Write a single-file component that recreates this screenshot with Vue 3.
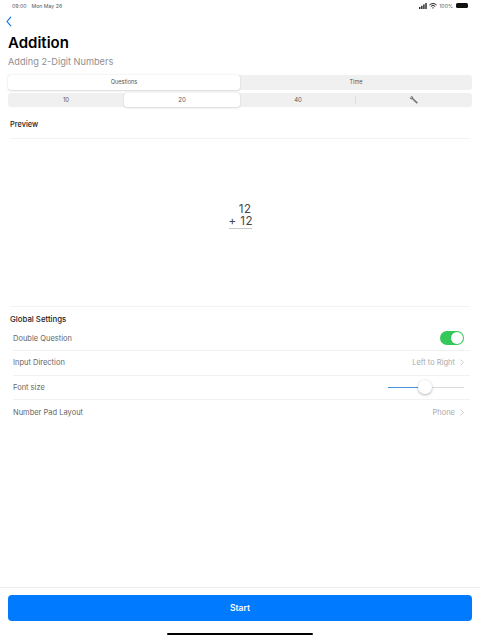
<template>
  <div class="screen">
    <!-- Status bar -->
    <div class="status-bar">
      <div class="status-left">
        <span>09:00</span>
        <span>Mon May 26</span>
      </div>
      <div class="status-right">
        <svg width="8" height="6" viewBox="0 0 8 6" class="signal">
          <rect x="0" y="4" width="1.4" height="2" />
          <rect x="2.1" y="2.8" width="1.4" height="3.2" />
          <rect x="4.2" y="1.4" width="1.4" height="4.6" />
          <rect x="6.3" y="0" width="1.4" height="6" />
        </svg>
        <svg width="8" height="6" viewBox="0 0 8 6" class="wifi">
          <path d="M0.4 2 A5.2 5.2 0 0 1 7.6 2" />
          <path d="M1.8 3.4 A3.2 3.2 0 0 1 6.2 3.4" />
          <path d="M3.1 4.7 A1.3 1.3 0 0 1 4.9 4.7 L4 5.7 Z" class="wifi-dot" />
        </svg>
        <span>100%</span>
        <div class="battery"></div>
      </div>
    </div>

    <!-- Nav -->
    <div class="nav">
      <svg width="6" height="11" viewBox="0 0 6 11" class="back">
        <path d="M5 0.8 L1 5.5 L5 10.2" />
      </svg>
    </div>

    <h1 class="title">Addition</h1>
    <div class="subtitle">Adding 2-Digit Numbers</div>

    <!-- Mode pickers -->
    <div class="segments">
      <div class="segment seg-top">
        <div v-for="m in modes" :key="m" class="seg-item" :class="{ active: m === 'Questions' }">{{ m }}</div>
      </div>
      <div class="segment seg-bottom">
        <div v-for="(c, i) in counts" :key="c" class="seg-item" :class="{ active: c === '20', 'has-sep': i === 2 }">{{ c }}</div>
        <div class="seg-item">
          <svg width="10" height="10" viewBox="0 0 10 10" class="wrench">
            <path d="M1.6 1.2 A2 2 0 0 1 4.3 3.2 L8.9 7.6 L7.7 8.8 L3.1 4.3 A2 2 0 0 1 0.9 1.9 L2.2 3 L2.9 2.4 Z" />
          </svg>
        </div>
      </div>
    </div>

    <!-- Preview -->
    <div class="section-title preview-title">Preview</div>
    <div class="preview">
      <div class="problem">
        <div class="problem-line">12</div>
        <div class="problem-line">+ 12</div>
        <div class="problem-rule"></div>
      </div>
    </div>

    <!-- Settings -->
    <div class="section-title settings-title">Global Settings</div>
    <div class="rows">
      <div class="row">
        <span>Double Question</span>
        <div class="toggle"><div class="knob"></div></div>
      </div>
      <div class="row">
        <span>Input Direction</span>
        <span class="value">Left to Right
          <svg width="4" height="7" viewBox="0 0 4 7" class="chev"><path d="M0.6 0.6 L3.4 3.5 L0.6 6.4" /></svg>
        </span>
      </div>
      <div class="row">
        <span>Font size</span>
        <div class="slider">
          <div class="slider-fill"></div>
          <div class="slider-track"></div>
          <div class="slider-thumb"></div>
        </div>
      </div>
      <div class="row">
        <span>Number Pad Layout</span>
        <span class="value">Phone
          <svg width="4" height="7" viewBox="0 0 4 7" class="chev"><path d="M0.6 0.6 L3.4 3.5 L0.6 6.4" /></svg>
        </span>
      </div>
    </div>

    <!-- Footer -->
    <div class="footer">
      <button class="start">Start</button>
      <div class="home-bar"></div>
    </div>
  </div>
</template>

<script setup>
const modes = ['Questions', 'Time']
const counts = ['10', '20', '40']
</script>

<style>
html, body {
  margin: 0;
  background: #fff;
}
</style>

<style scoped>
.screen {
  width: 480px;
  height: 640px;
  display: flex;
  flex-direction: column;
  background: #fff;
  overflow: hidden;
  font-family: Inter, "Liberation Sans", sans-serif;
  color: #000;
}

/* Status bar */
.status-bar {
  height: 11px;
  padding: 0 12px;
  display: flex;
  justify-content: space-between;
  align-items: center;
  font-size: 5.2px;
  color: #555;
}

.status-left {
  display: flex;
  gap: 5px;
}

.status-right {
  display: flex;
  align-items: center;
  gap: 2px;
}

.signal {
  fill: #222;
}

.wifi path {
  fill: none;
  stroke: #222;
  stroke-width: 1;
}

.wifi .wifi-dot {
  fill: #222;
  stroke: none;
}

.battery {
  width: 12px;
  height: 5px;
  margin-left: 1px;
  border-radius: 1.5px;
  background: #111;
}

/* Header */
.nav {
  height: 11px;
  margin-top: 5px;
  padding-left: 6px;
}

.back {
  display: block;
}

.back path {
  fill: none;
  stroke: #0a6fe0;
  stroke-width: 1.1;
}

.title {
  margin: 6px 0 0 8px;
  font-size: 15px;
  line-height: 20px;
  font-weight: 600;
}

.subtitle {
  margin: 3px 0 0 8px;
  font-size: 9.2px;
  line-height: 12px;
  color: #8e8e92;
}

/* Segments */
.segments {
  margin: 7px 8px 0;
  display: flex;
  flex-direction: column;
  gap: 3px;
}

.segment {
  display: flex;
  height: 14.5px;
  border-radius: 3px;
  background: #f0f0f1;
}

.seg-item {
  flex: 1;
  display: flex;
  align-items: center;
  justify-content: center;
  font-size: 5.6px;
  color: #555;
}

.seg-item.active {
  background: #fff;
  border-radius: 3px;
  box-shadow: 0 0.5px 2px rgba(0, 0, 0, 0.16);
}

/* short divider between two segments */
.seg-item.has-sep {
  position: relative;
}

.seg-item.has-sep::after {
  content: "";
  position: absolute;
  right: 0;
  top: 3.5px;
  bottom: 3.5px;
  width: 1px;
  background: #dedee0;
}

.seg-bottom .seg-item {
  font-size: 6px;
}

.wrench {
  fill: #777;
}

/* Sections */
.section-title {
  margin-left: 10px;
  font-size: 7.4px;
  line-height: 10px;
  font-weight: 500;
  color: #222;
}

.preview-title {
  margin-top: 13px;
}

.preview {
  height: 167px;
  margin: 7.5px 10px 0;
  border-top: 1px solid #f2f2f3;
  border-bottom: 1px solid #f2f2f3;
  display: flex;
  justify-content: center;
}

.problem {
  margin-top: 64px;
  width: 23px;
  font-size: 11.5px;
  letter-spacing: 0.5px;
  line-height: 12px;
  color: #444;
  text-align: right;
  white-space: nowrap;
}

.problem-rule {
  height: 1px;
  margin-top: 1px;
  background: #c8c8ca;
}

.settings-title {
  margin-top: 7px;
  font-size: 7.8px;
}

/* Rows */
.rows {
  margin: 3px 10px 0 13px;
}

.row {
  box-sizing: border-box;
  height: 24.6px;
  display: flex;
  align-items: center;
  justify-content: space-between;
  font-size: 7.5px;
  color: #666;
  border-bottom: 1px solid #f2f2f3;
  padding-right: 6px;
}

.row:last-child {
  border-bottom: none;
}

.value {
  display: flex;
  align-items: center;
  gap: 5px;
  color: #aaaaad;
}

.chev path {
  fill: none;
  stroke: #c8c8ca;
  stroke-width: 0.9;
}

.toggle {
  width: 24px;
  height: 14px;
  border-radius: 7px;
  background: #34c759;
  position: relative;
}

.knob {
  position: absolute;
  top: 1px;
  right: 1px;
  width: 12px;
  height: 12px;
  border-radius: 50%;
  background: #fff;
}

.slider {
  width: 76px;
  height: 14px;
  display: flex;
  align-items: center;
  position: relative;
}

.slider-fill {
  width: 37px;
  height: 1px;
  background: #4a90e0;
}

.slider-track {
  flex: 1;
  height: 1px;
  background: #dcdcde;
}

.slider-thumb {
  position: absolute;
  left: 30px;
  top: 0;
  width: 14px;
  height: 14px;
  border-radius: 50%;
  background: #fff;
  box-shadow: 0 1px 3px rgba(0, 0, 0, 0.3);
}

/* Footer */
.footer {
  margin-top: auto;
  height: 53px;
  border-top: 1px solid #ececee;
  display: flex;
  flex-direction: column;
  align-items: center;
  box-sizing: border-box;
}

.start {
  width: 464px;
  height: 26px;
  margin-top: 7px;
  border: none;
  border-radius: 4px;
  background: #007aff;
  color: #fff;
  font-family: inherit;
  font-size: 8.6px;
  font-weight: 600;
}

.home-bar {
  width: 146px;
  height: 2px;
  margin-top: 12px;
  border-radius: 1px;
  background: #000;
}
</style>
